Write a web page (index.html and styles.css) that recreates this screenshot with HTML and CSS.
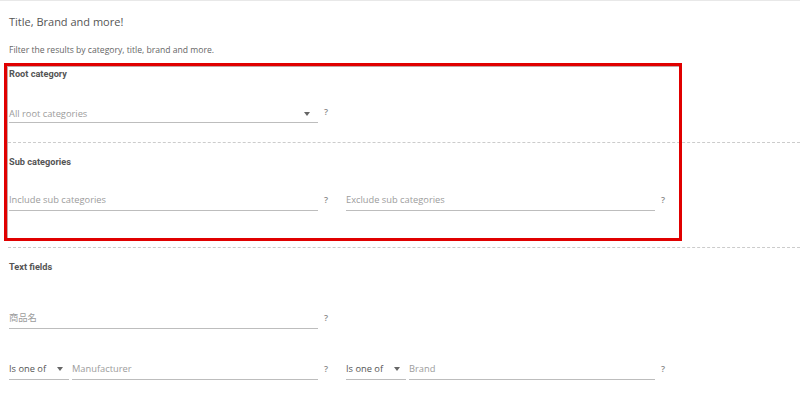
FILE: index.html
```html
<!DOCTYPE html>
<html lang="en">
<head>
<meta charset="utf-8">
<title>Title, Brand and more!</title>
<link rel="stylesheet" href="styles.css">
</head>
<body>
<div class="page">
  <header class="intro">
    <h1 class="title">Title, Brand and more!</h1>
    <p class="caption">Filter the results by category, title, brand and more.</p>
  </header>

  <div class="highlighted">
    <section class="section section-root">
      <h2 class="label">Root category</h2>
      <div class="row row-first">
        <div class="group">
          <div class="field select low"><span class="placeholder">All root categories</span><span class="caret"></span></div>
          <span class="help">?</span>
        </div>
      </div>
    </section>

    <section class="section section-sub">
      <h2 class="label">Sub categories</h2>
      <div class="row row-first">
        <div class="group">
          <div class="field"><span class="placeholder">Include sub categories</span></div>
          <span class="help">?</span>
        </div>
        <div class="group">
          <div class="field"><span class="placeholder">Exclude sub categories</span></div>
          <span class="help">?</span>
        </div>
      </div>
    </section>

    <div class="annotation"></div>
  </div>

  <section class="section section-text">
    <h2 class="label">Text fields</h2>
    <div class="row row-wide">
      <div class="group">
        <div class="field"><span class="placeholder">商品名</span></div>
        <span class="help">?</span>
      </div>
    </div>
    <div class="row row-next">
      <div class="group">
        <div class="combo">
          <div class="field mini select"><span class="value">Is one of</span><span class="caret caret-mini"></span></div>
          <div class="field grow"><span class="placeholder">Manufacturer</span></div>
        </div>
        <span class="help">?</span>
      </div>
      <div class="group">
        <div class="combo">
          <div class="field mini select"><span class="value">Is one of</span><span class="caret caret-mini"></span></div>
          <div class="field grow"><span class="placeholder">Brand</span></div>
        </div>
        <span class="help">?</span>
      </div>
    </div>
  </section>
</div>
</body>
</html>
```

FILE: styles.css
```css
* {
  box-sizing: border-box;
}

html, body {
  margin: 0;
  padding: 0;
  background: #ffffff;
}

body {
  font-family: "Open Sans", "Noto Sans CJK JP", sans-serif;
  color: #555555;
}

.page {
  border-top: 1px solid #e8e8e8;
  min-height: 406px;
}

.intro {
  padding: 12px 0 0 9px;
}

.title {
  margin: 0;
  font-size: 11px;
  line-height: 18px;
  font-weight: 400;
  color: #555555;
}

.caption {
  margin: 12px 0 0 0;
  font-size: 8.6px;
  line-height: 14px;
  color: #666666;
}

.highlighted {
  position: relative;
}

.annotation {
  position: absolute;
  left: 4px;
  top: 6px;
  width: 678px;
  height: 178px;
  border: 3px solid #e00000;
  box-shadow: inset 1px 1px 0 rgba(90, 0, 0, 0.35);
  pointer-events: none;
}

.section {
  margin-left: 8px;
  padding-left: 1px;
  border-bottom: 1px dashed #cccccc;
}

.section-root {
  padding-top: 10px;
  padding-bottom: 19px;
}

.section-sub {
  padding-top: 12px;
  padding-bottom: 36px;
}

.section-text {
  padding-top: 12px;
  padding-bottom: 20px;
  border-bottom: none;
}

.label {
  margin: 0;
  font-family: Roboto, "Open Sans", sans-serif;
  font-size: 9.2px;
  line-height: 14px;
  font-weight: 700;
  color: #555555;
}

.row {
  display: flex;
}

.row-first {
  margin-top: 23px;
}

.row-wide {
  margin-top: 36px;
}

.row-next {
  margin-top: 32px;
}

.group {
  display: flex;
  align-items: flex-start;
  width: 337px;
}

.field,
.combo {
  width: 309px;
  flex: none;
}

.combo {
  display: flex;
  gap: 3px;
}

.field {
  display: flex;
  align-items: center;
  height: 19px;
  padding-bottom: 2px;
  border-bottom: 1px solid #bdbdbd;
  font-size: 9.3px;
  line-height: 16px;
}

.field.low {
  padding-bottom: 0;
  padding-top: 2px;
}

.field.mini {
  width: 60px;
}

.field.grow {
  flex: 1;
  width: auto;
}

.placeholder {
  color: #9c9c9c;
  white-space: nowrap;
}

.value {
  color: #555555;
  white-space: nowrap;
}

.select .caret {
  margin-left: auto;
}

.caret {
  width: 0;
  height: 0;
  border-left: 3.5px solid transparent;
  border-right: 3.5px solid transparent;
  border-top: 4px solid #666666;
  margin-right: 8px;
}

.caret-mini {
  margin-right: 6px;
}

.help {
  padding-left: 6px;
  font-size: 9px;
  line-height: 16px;
  font-weight: 600;
  color: #8a8a8a;
}
```
